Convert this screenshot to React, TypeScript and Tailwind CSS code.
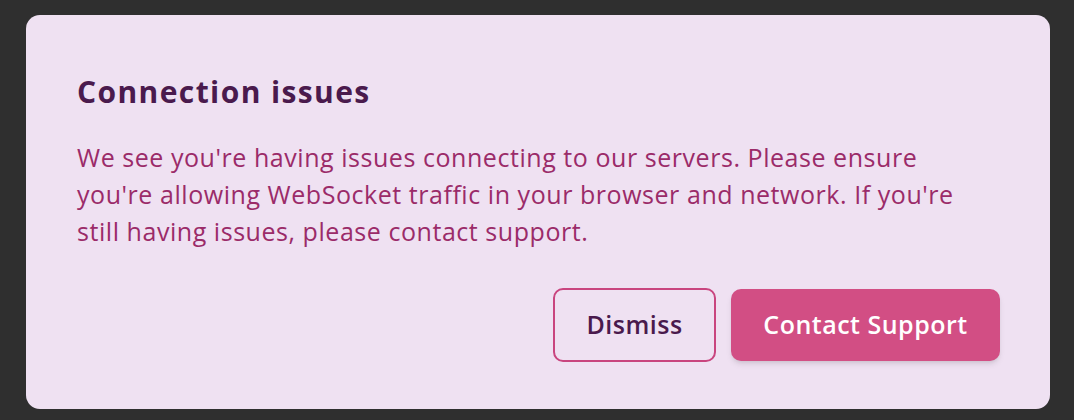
export default function App() {
  return (
    <div className="h-[420px] w-[1074px] bg-[#2f2f2f] pl-[26px] pr-[24px] pt-[15px] pb-[11px] font-['Open_Sans',sans-serif]">
      <div className="flex h-full flex-col rounded-[14px] bg-[#efe1f2] pl-[51px] pr-[50px] pt-[57px]">
        <h2 className="text-[30px] font-bold leading-[40px] tracking-[1.4px] text-[#4a1a4d]">Connection issues</h2>
        <p className="mt-[27px] text-[25px] leading-[37px] tracking-[0.55px] text-[#9b2b69]">
          We see you're having issues connecting to our servers. Please ensure you're allowing WebSocket traffic in your browser and network. If you're still having issues, please contact support.
        </p>
        <div className="mt-[38px] flex justify-end gap-[15px]">
          <button className="h-[74px] w-[163px] rounded-[10px] border-2 border-[#c9457f] text-[25px] font-semibold tracking-[0.5px] text-[#4a1a4d]">
            Dismiss
          </button>
          <button className="mt-px h-[72px] w-[269px] rounded-[10px] bg-[#d24e84] text-[25px] font-semibold tracking-[0.5px] text-white shadow-md">
            Contact Support
          </button>
        </div>
      </div>
    </div>
  );
}
